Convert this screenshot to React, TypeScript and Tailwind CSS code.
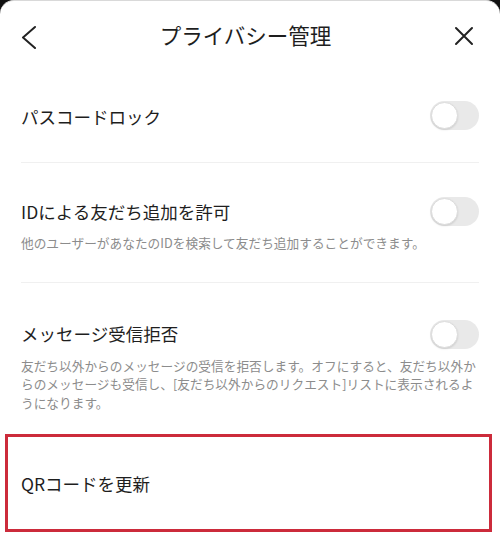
import React from "react";

const font = { fontFamily: '"Noto Sans CJK JP", "Noto Sans", sans-serif' };

function Toggle() {
  return (
    <div className="relative h-[29px] w-[49px] shrink-0 rounded-full bg-[#e9e9e9]">
      <div className="absolute left-[1px] top-[1px] h-[27px] w-[27px] rounded-full border border-[#dcdcdc] bg-white shadow-[0_1px_2px_rgba(0,0,0,0.12)]" />
    </div>
  );
}

function SettingRow({
  title,
  description,
  className,
}: {
  title: string;
  description?: string;
  className: string;
}) {
  return (
    <div className={className}>
      <div className="flex items-center justify-between">
        <p className="text-[17.5px] leading-[24px] text-[#1e1e1e]">{title}</p>
        <Toggle />
      </div>
      {description && (
        <p className="mt-[8px] pr-[2px] text-[12.7px] leading-[18.5px] text-[#8c8c8c]">{description}</p>
      )}
    </div>
  );
}

export default function App() {
  return (
    <div className="h-[556px] w-[500px] overflow-hidden bg-[#111]" style={font}>
      <div className="h-full rounded-t-[14px] border-t border-[#d9d9d9] bg-white">
        <header className="flex h-[67px] items-center justify-between px-[20px]">
          <svg width="18" height="24" viewBox="0 0 18 24" fill="none" className="mt-[4px]">
            <path d="M15 2 L3 12.5 L15 23" stroke="#222" strokeWidth="2" strokeLinecap="round" strokeLinejoin="round" />
          </svg>
          <h1 className="text-[21.5px] leading-[28px] text-[#1e1e1e]">プライバシー管理</h1>
          <svg width="22" height="22" viewBox="0 0 22 22" fill="none" className="mr-[5px] mt-[3px]">
            <path d="M3 3 L19 19 M19 3 L3 19" stroke="#222" strokeWidth="2" strokeLinecap="round" />
          </svg>
        </header>

        <div className="mx-[21px]">
          <div className="flex h-[94px] items-center justify-between">
            <p className="mt-[3px] text-[17.5px] leading-[24px] text-[#1e1e1e]">パスコードロック</p>
            <Toggle />
          </div>
          <div className="h-px bg-[#f0f0f0]" />
          <SettingRow
            className="pb-[29px] pt-[34px]"
            title="IDによる友だち追加を許可"
            description="他のユーザーがあなたのIDを検索して友だち追加することができます。"
          />
          <div className="h-px bg-[#f0f0f0]" />
          <SettingRow
            className="pb-[22px] pt-[37px]"
            title="メッセージ受信拒否"
            description="友だち以外からのメッセージの受信を拒否します。オフにすると、友だち以外からのメッセージも受信し、[友だち以外からのリクエスト]リストに表示されるようになります。"
          />
        </div>

        <div className="mx-[5px] flex h-[98px] w-[487px] items-center border-[3px] border-[#cc2b3b] pl-[13px]">
          <p className="mt-[1px] text-[17.5px] leading-[24px] text-[#1e1e1e]">QRコードを更新</p>
        </div>
      </div>
    </div>
  );
}
